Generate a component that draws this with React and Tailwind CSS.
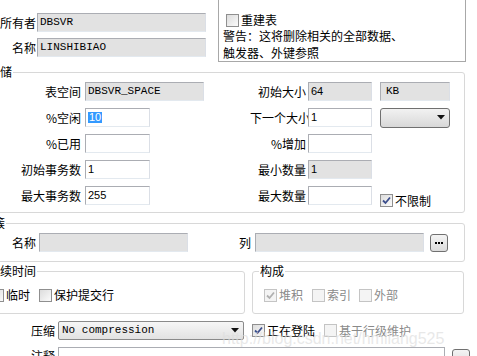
import React from "react";

const CJK = "font-['Noto_Sans_CJK_SC','Noto_Sans',sans-serif]";
const MONO = "font-['Liberation_Mono',monospace]";

function Input({ w, grey, children, mono = true, className = "" }) {
  return (
    <div
      className={`h-[19px] shrink-0 border border-[#abadb3] border-b-[#e3e9ef] border-r-[#dbdfe6] flex items-center pl-[2px] text-[11px] leading-none ${
        grey ? "bg-[#e2e2e2]" : "bg-white"
      } ${mono ? MONO : "font-['Liberation_Sans',sans-serif]"} ${className}`}
      style={{ width: w }}
    >
      {children}
    </div>
  );
}

function Cb({ checked, disabled }) {
  return (
    <span
      className={`w-[13px] h-[13px] shrink-0 border flex items-center justify-center ${
        disabled
          ? "border-[#c4c4c4] bg-[#f4f4f4]"
          : "border-[#8f8f8f] bg-gradient-to-br from-[#dcdcdc] to-[#fbfbfb]"
      }`}
    >
      {checked && (
        <svg width="9" height="9" viewBox="0 0 9 9">
          <path
            d="M1 4.5 L3.5 7 L8 1.5"
            fill="none"
            stroke={disabled ? "#b0b0b0" : "#3c4e8c"}
            strokeWidth="1.8"
          />
        </svg>
      )}
    </span>
  );
}

function Check({ checked, disabled, label, className = "" }) {
  return (
    <div className={`flex items-center gap-[2px] ${className}`}>
      <Cb checked={checked} disabled={disabled} />
      <span className={`leading-[14px] ${disabled ? "text-[#8a8a8a]" : ""}`}>{label}</span>
    </div>
  );
}

function Arrow() {
  return (
    <svg width="8" height="5" viewBox="0 0 8 5">
      <path d="M0 0 L8 0 L4 4.5 Z" fill="#111" />
    </svg>
  );
}

function Dots({ className = "" }) {
  return (
    <div
      className={`w-[18px] h-[18px] shrink-0 rounded-[3px] border border-[#707070] bg-gradient-to-b from-[#f4f4f4] to-[#dcdcdc] flex items-center justify-center ${className}`}
    >
      <span className="flex gap-[1px]">
        <span className="w-[2px] h-[2px] bg-black" />
        <span className="w-[2px] h-[2px] bg-black" />
        <span className="w-[2px] h-[2px] bg-black" />
      </span>
    </div>
  );
}

function Row({ label, left, rlabel, right, extra }) {
  return (
    <div className="flex items-center h-[19px]">
      <div className="w-[269px] flex items-center shrink-0">
        <span className="w-[100px] text-right leading-[19px] shrink-0">{label}</span>
        <span className="w-[4px] shrink-0" />
        {left}
      </div>
      <span className="w-[56px] text-right leading-[19px] shrink-0 whitespace-nowrap">{rlabel}</span>
      <span className="w-[2px] shrink-0" />
      {right}
      {extra && <span className="w-[8px] shrink-0" />}
      {extra}
    </div>
  );
}

export default function App() {
  return (
    <div
      className={`relative w-[477px] h-[356px] overflow-hidden bg-white text-[12px] text-black ${CJK}`}
    >
      {/* top */}
      <div className="flex h-[62px]">
        <div className="w-[218px] shrink-0 pt-[13px] flex flex-col gap-[6px]">
          <div className="flex items-center">
            <span className="w-[36px] text-right leading-[18px] shrink-0 whitespace-nowrap">所有者</span>
            <span className="w-[1px]" />
            <Input w={169} grey>
              DBSVR
            </Input>
          </div>
          <div className="flex items-center">
            <span className="w-[36px] text-right leading-[18px] shrink-0">名称</span>
            <span className="w-[1px]" />
            <Input w={169} grey>
              LINSHIBIAO
            </Input>
          </div>
        </div>
        <div className="w-[248px] h-[63px] -mt-[1px] border border-[#a8a8a8] shrink-0 pl-[4px] pt-[13px]">
          <Check label="重建表" className="ml-[3px]" />
          <div className="leading-[17px]">警告：这将删除相关的全部数据、</div>
          <div className="leading-[17px]">触发器、外键参照</div>
        </div>
      </div>

      {/* storage */}
      <fieldset className="mt-[2px] ml-[-20px] w-[485px] border border-[#d8d8d8] rounded-[3px] pt-[2px] pb-[7px]">
        <legend className="ml-[6px] px-[1px] leading-[16px]">存储</legend>
        <div className="flex flex-col gap-[7px]">
          <Row
            label="表空间"
            left={
              <Input w={119} grey>
                DBSVR_SPACE
              </Input>
            }
            rlabel="初始大小"
            right={
              <Input w={64} grey mono={false}>
                64
              </Input>
            }
            extra={
              <Input w={70} grey className="pl-[5px]">
                KB
              </Input>
            }
          />
          <Row
            label="%空闲"
            left={
              <Input w={65} mono={false}>
                <span className="bg-[#3399ff] text-white px-[1px]">10</span>
              </Input>
            }
            rlabel="下一个大小"
            right={
              <Input w={64} mono={false}>
                1
              </Input>
            }
            extra={
              <div className="w-[70px] h-[20px] rounded-[3px] border border-[#707070] bg-gradient-to-b from-[#f2f2f2] to-[#d8d8d8] flex items-center justify-end pr-[4px]">
                <Arrow />
              </div>
            }
          />
          <Row label="%已用" left={<Input w={65} />} rlabel="%增加" right={<Input w={64} />} />
          <Row
            label="初始事务数"
            left={
              <Input w={65} mono={false}>
                1
              </Input>
            }
            rlabel="最小数量"
            right={
              <Input w={64} grey mono={false}>
                1
              </Input>
            }
          />
          <Row
            label="最大事务数"
            left={
              <Input w={65} mono={false}>
                255
              </Input>
            }
            rlabel="最大数量"
            right={<Input w={64} />}
            extra={<Check checked label="不限制" className="mt-[10px]" />}
          />
        </div>
      </fieldset>

      {/* cluster */}
      <fieldset className="mt-[2px] ml-[-20px] w-[485px] border border-[#d8d8d8] rounded-[3px] pt-[2px] pb-[9px]">
        <legend className="ml-[11px] px-[1px] leading-[16px]">簇</legend>
        <div className="flex items-center h-[19px]">
          <span className="w-[55px] text-right leading-[19px] shrink-0">名称</span>
          <span className="w-[3px]" />
          <Input w={149} grey />
          <span className="w-[63px] text-right shrink-0">列</span>
          <span className="w-[4px]" />
          <Input w={169} grey />
          <Dots className="ml-[6px]" />
        </div>
      </fieldset>

      {/* duration + composition */}
      <div className="flex mt-[1px]">
        <fieldset className="ml-[-20px] w-[265px] shrink-0 border border-[#d8d8d8] rounded-[3px] pt-[9px] pb-[11px]">
          <legend className="ml-[6px] px-[1px] leading-[16px]">持续时间</legend>
          <div className="flex items-center">
            <Check label="临时" className="ml-[10px]" />
            <Check label="保护提交行" className="ml-[9px]" />
          </div>
        </fieldset>
        <fieldset className="ml-[7px] w-[212px] shrink-0 border border-[#d8d8d8] rounded-[3px] pt-[9px] pb-[11px]">
          <legend className="ml-[6px] px-[1px] leading-[16px]">构成</legend>
          <div className="flex items-center">
            <Check checked disabled label="堆积" className="ml-[11px]" />
            <Check disabled label="索引" className="ml-[9px]" />
            <Check disabled label="外部" className="ml-[8px]" />
          </div>
        </fieldset>
      </div>

      {/* compression */}
      <div className="flex items-center mt-[7px] h-[19px]">
        <span className="w-[55px] text-right shrink-0">压缩</span>
        <span className="w-[3px]" />
        <div
          className={`w-[186px] h-[19px] shrink-0 rounded-[2px] border border-[#8a8a8a] bg-gradient-to-b from-[#f6f6f6] to-[#e2e2e2] flex items-center justify-between pl-[3px] pr-[4px] text-[11px] ${MONO}`}
        >
          <span>No compression</span>
          <Arrow />
        </div>
        <Check checked label="正在登陆" className="ml-[8px]" />
        <Check disabled label="基于行级维护" className="ml-[9px]" />
      </div>

      {/* comment */}
      <div className="flex items-start mt-[7px]">
        <span className="w-[55px] text-right shrink-0 leading-[16px] mt-[1px]">注释</span>
        <span className="w-[3px]" />
        <div className="w-[387px] h-[30px] shrink-0 border border-[#abadb3] bg-white" />
        <Dots className="ml-[7px] mt-[2px]" />
      </div>

      {/* watermark */}
      <div className="absolute left-[222px] top-[327px] text-[16px] text-[#dedede]/70 font-['Liberation_Sans',sans-serif] pointer-events-none whitespace-nowrap">
        http://blog.csdn.net/hmliang525
      </div>
    </div>
  );
}
